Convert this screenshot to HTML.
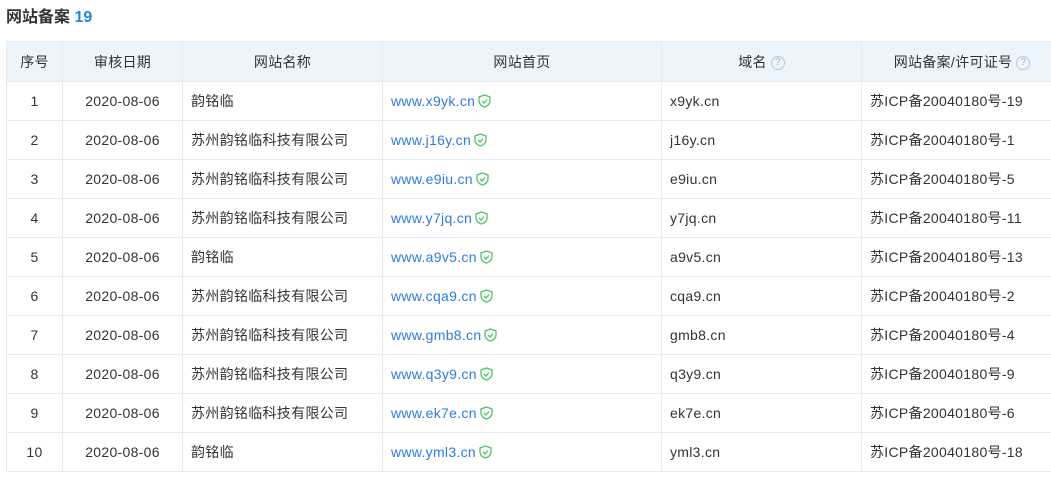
<!DOCTYPE html>
<html><head><meta charset="utf-8"><style>
body{margin:0;background:#fff;font-family:"Liberation Sans","Noto Sans CJK SC",sans-serif;color:#333;width:1051px;height:478px;overflow:hidden;position:relative}
h1{position:absolute;left:6px;top:6px;margin:0;font-size:16px;font-weight:bold;color:#333;line-height:24px}
h1 span{color:#1e88e5}
table{position:absolute;left:6px;top:41px;border-collapse:collapse;table-layout:fixed;font-size:14px;width:1056px;letter-spacing:0.3px}
td,th{border:1px solid #e3ebf3;height:38px;padding:0 8px;white-space:nowrap;overflow:hidden}
th{background:#edf5fc;font-weight:normal;height:39px;text-align:center}
td.c{text-align:center}
a{color:#2d7be5;text-decoration:none}
.q{display:inline-block;width:12px;height:12px;border:1px solid #b3c8dc;border-radius:50%;font-size:10px;line-height:12px;color:#9fb6cc;text-align:center;vertical-align:middle;margin-left:4px;letter-spacing:0}
svg{vertical-align:-2px;margin-left:3px}
</style></head><body>
<h1>网站备案 <span>19</span></h1>
<table>
<colgroup><col style="width:56px"><col style="width:120px"><col style="width:200px"><col style="width:279px"><col style="width:200px"><col style="width:201px"></colgroup>
<tr><th>序号</th><th>审核日期</th><th>网站名称</th><th>网站首页</th><th>域名<span class="q">?</span></th><th>网站备案/许可证号<span class="q">?</span></th></tr>
<tbody id="b"></tbody>
</table>
<script>
var d=[["韵铭临","x9yk","19"],["苏州韵铭临科技有限公司","j16y","1"],["苏州韵铭临科技有限公司","e9iu","5"],["苏州韵铭临科技有限公司","y7jq","11"],["韵铭临","a9v5","13"],["苏州韵铭临科技有限公司","cqa9","2"],["苏州韵铭临科技有限公司","gmb8","4"],["苏州韵铭临科技有限公司","q3y9","9"],["苏州韵铭临科技有限公司","ek7e","6"],["韵铭临","yml3","18"]];
var s='<svg width="13" height="14" viewBox="0 0 13 14"><path d="M6.5 1 L12 3 V7 C12 10 9.5 12 6.5 13 C3.5 12 1 10 1 7 V3 Z" fill="none" stroke="#4cc46a" stroke-width="1.3"/><path d="M4 7 L6 9 L9 5.5" fill="none" stroke="#4cc46a" stroke-width="1.3"/></svg>';
var h='';d.forEach(function(r,i){h+='<tr><td class="c">'+(i+1)+'</td><td class="c">2020-08-06</td><td>'+r[0]+'</td><td><a>www.'+r[1]+'.cn</a>'+s+'</td><td>'+r[1]+'.cn</td><td>苏ICP备20040180号-'+r[2]+'</td></tr>'});
document.getElementById('b').innerHTML=h;
</script>
</body></html>
